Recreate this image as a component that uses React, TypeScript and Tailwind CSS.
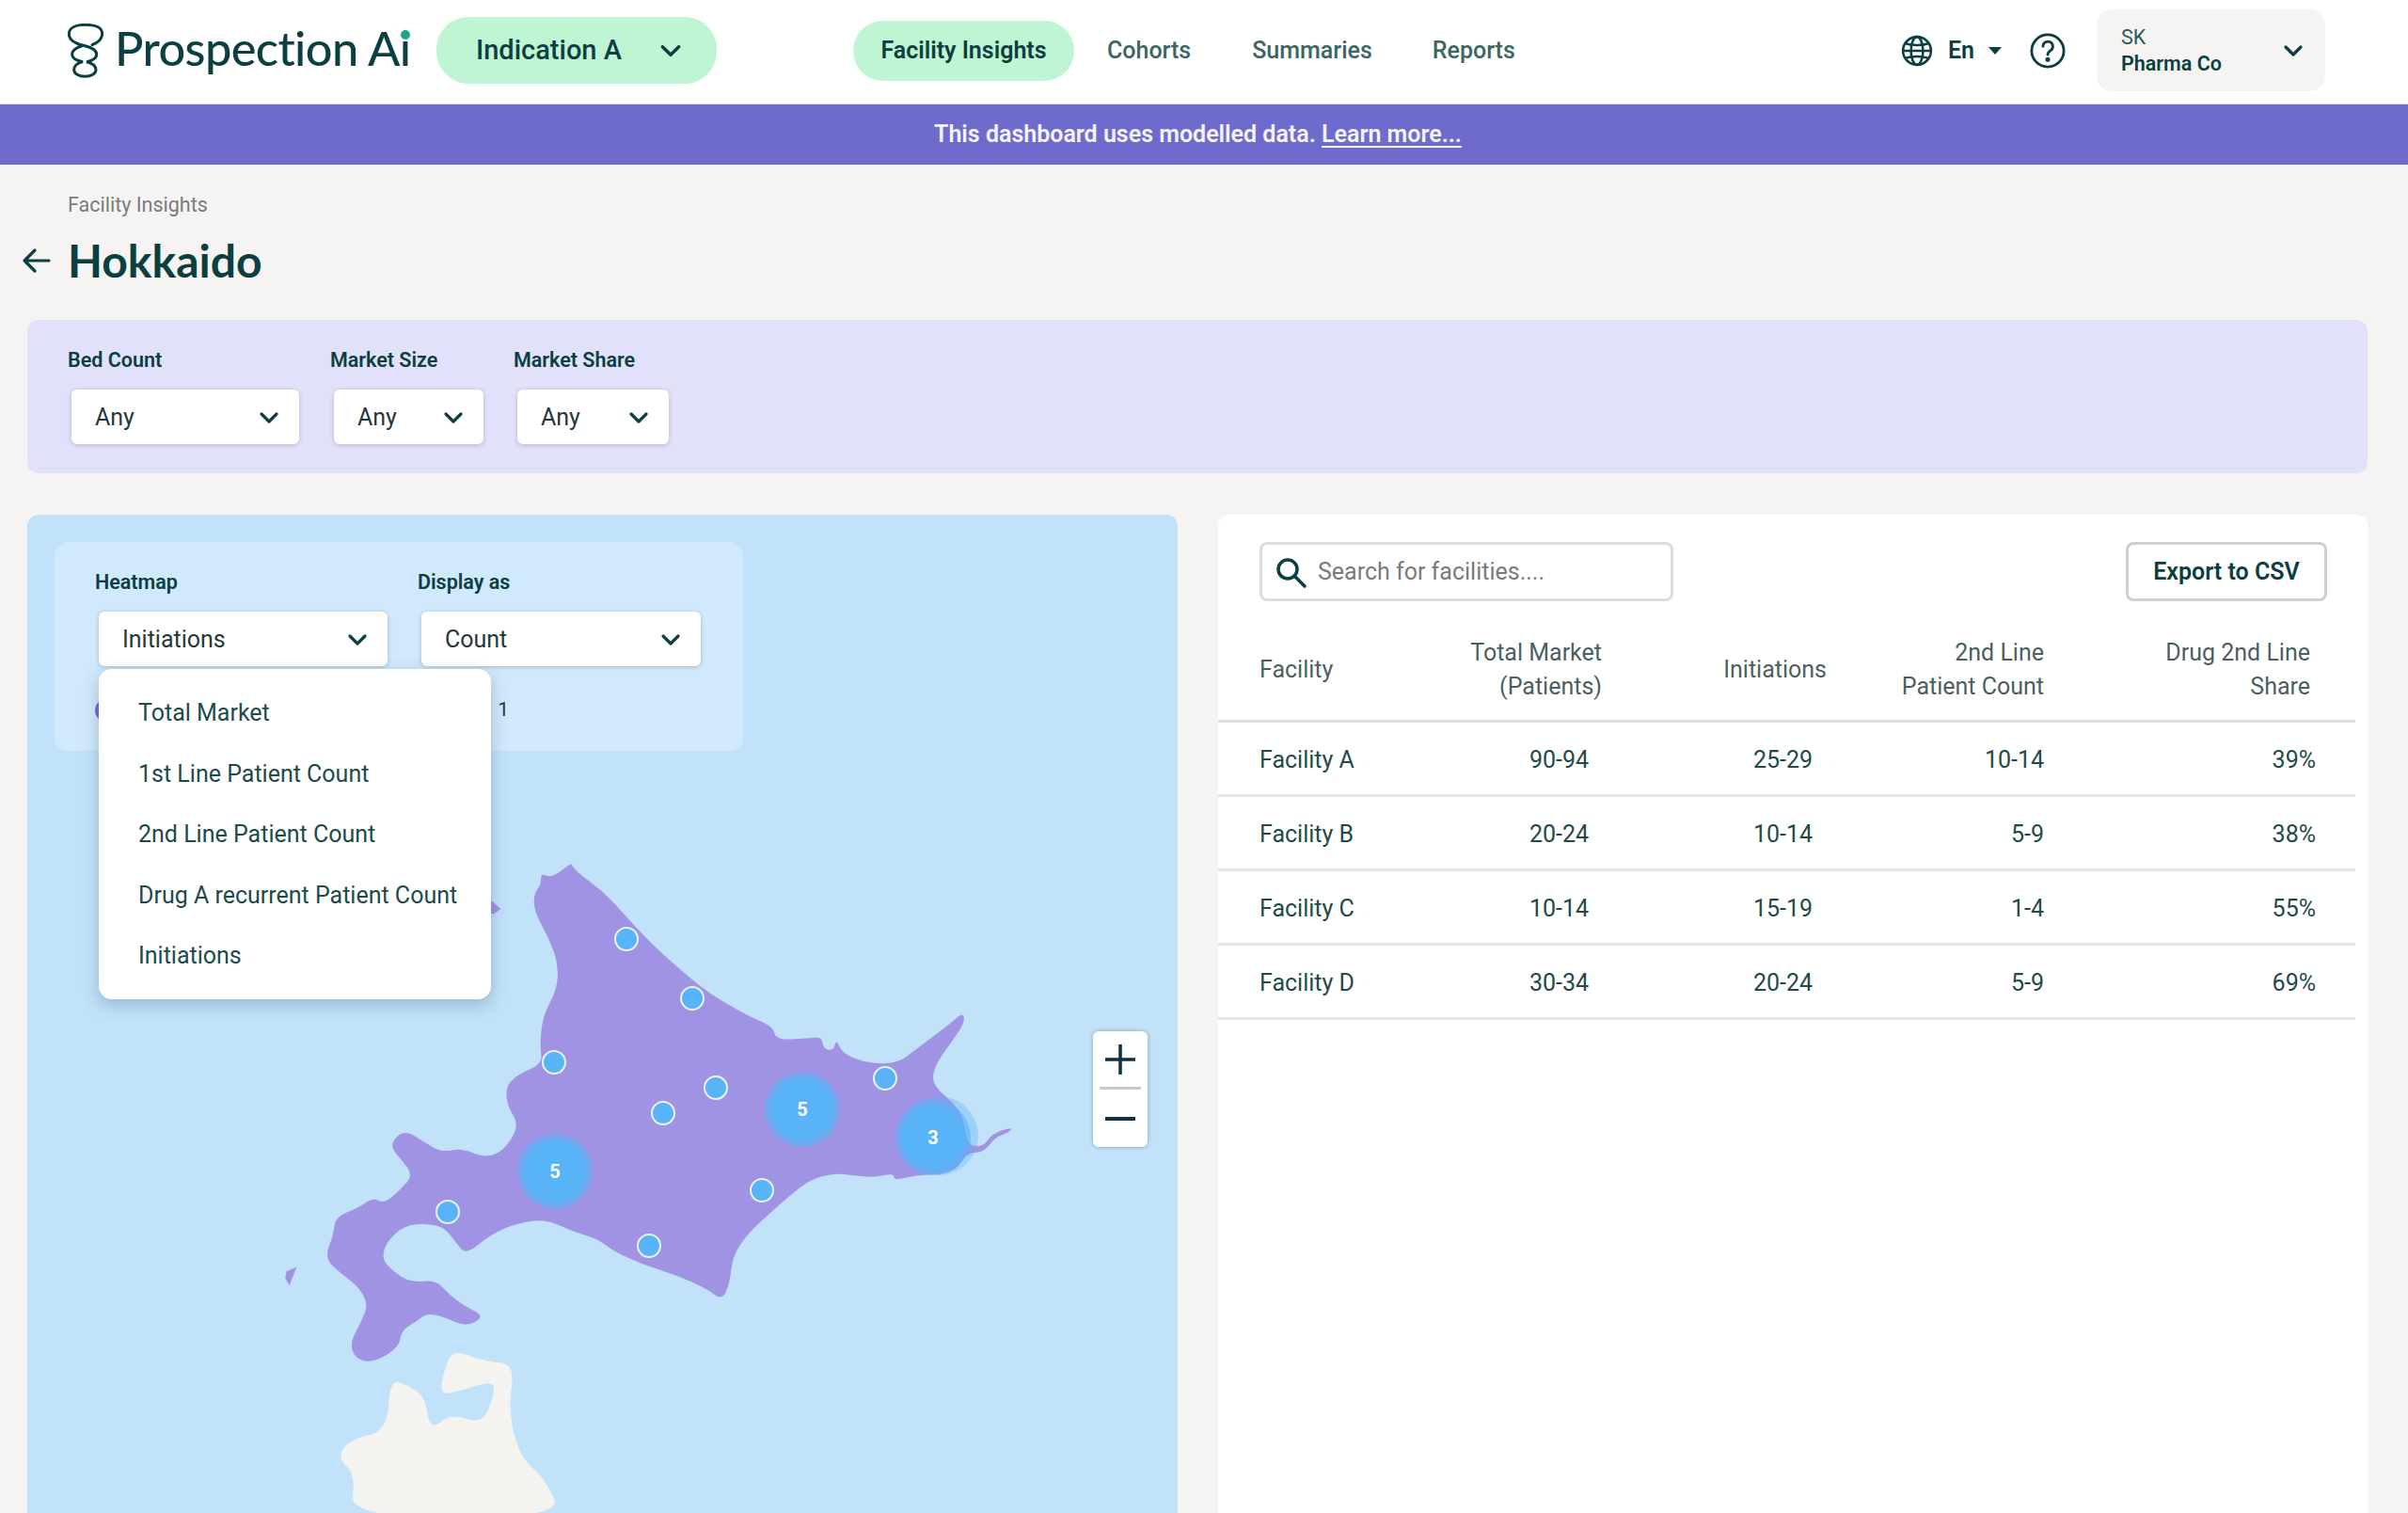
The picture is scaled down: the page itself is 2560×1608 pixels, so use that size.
import React from "react";

const DARK = "#0b3f41";

function Chevron({ className = "", size = 24, sw = 3.2 }: { className?: string; size?: number; sw?: number }) {
  return (
    <svg className={className} width={size} height={size} viewBox="0 0 24 24" fill="none" stroke={DARK} strokeWidth={sw} strokeLinecap="round" strokeLinejoin="round">
      <path d="M4 8l8 8 8-8" />
    </svg>
  );
}

function Select({ label, value, w, labelWrapClass = "" }: { label: string; value: string; w: string; labelWrapClass?: string }) {
  return (
    <div className={labelWrapClass}>
      <div className="text-[21.5px] leading-[24px] font-semibold text-[#0b3f41]">{label}</div>
      <div className={`${w} mt-[19px] ml-[4px] h-[58px] pt-[2px] rounded-[6px] bg-white shadow-[0_1px_5px_rgba(0,0,0,0.2)] flex items-center justify-between pl-[25px] pr-[20px] text-[25px] text-[#26373a]`}>
        <span>{value}</span>
        <Chevron />
      </div>
    </div>
  );
}

// Rounds the corners of a traced outline, keeping it a single drawing path.
function smooth(pts: number[][]) {
  const n = pts.length;
  const mid = (a: number[], b: number[]) => [(a[0] + b[0]) / 2, (a[1] + b[1]) / 2];
  const start = mid(pts[n - 1], pts[0]);
  let d = `M${start[0]} ${start[1]}`;
  for (let i = 0; i < n; i++) {
    const m = mid(pts[i], pts[(i + 1) % n]);
    d += `Q${pts[i][0]} ${pts[i][1]} ${m[0]} ${m[1]}`;
  }
  return d + "Z";
}

const hokkaido = [
  [535, 85], [548, 105], [590, 145], [625, 195], [670, 260], [720, 320], [770, 375], [815, 410], [850, 435], [885, 455], [890, 485], [945, 482], [970, 478], [972, 505], [990, 510], [995, 483], [1005, 515], [1040, 535], [1075, 540], [1105, 535], [1130, 510], [1170, 470], [1195, 445], [1215, 422], [1218, 445], [1195, 490], [1170, 535], [1160, 575], [1175, 605], [1195, 625], [1215, 660], [1222, 726], [1250, 730], [1265, 700], [1302, 684], [1295, 697], [1270, 708], [1252, 742], [1220, 744], [1200, 790], [1130, 795], [1095, 807], [1095, 790], [1060, 800], [1025, 795], [990, 790], [950, 805], [920, 835], [885, 875], [840, 930], [815, 980], [810, 1040], [797, 1082], [770, 1055], [720, 1025], [660, 1000], [610, 970], [580, 940], [540, 925], [490, 895], [440, 905], [395, 930], [352, 977], [335, 950], [315, 915], [285, 905], [245, 910], [215, 945], [205, 985], [225, 1015], [255, 1040], [300, 1035], [320, 1065], [350, 1095], [385, 1118], [352, 1142], [315, 1120], [285, 1110], [265, 1130], [240, 1150], [235, 1190], [190, 1224], [160, 1215], [150, 1180], [170, 1130], [182, 1090], [165, 1050], [135, 1020], [106, 985], [122, 930], [125, 890], [165, 870], [190, 846], [210, 860], [240, 825], [260, 795], [240, 760], [218, 725], [245, 690], [280, 720], [310, 742], [345, 733], [385, 755], [415, 740], [437, 700], [440, 670], [425, 640], [420, 595], [440, 565], [485, 540], [480, 500], [485, 430], [510, 370], [512, 310], [495, 250], [470, 190], [470, 150], [482, 130], [482, 103], [500, 115], [535, 80],
];

const honshu = [
  [330, 1193], [385, 1222], [437, 1226], [425, 1330], [445, 1440], [490, 1490], [520, 1580], [150, 1580], [160, 1480], [128, 1440], [150, 1400], [215, 1380], [220, 1262], [250, 1275], [280, 1300], [290, 1380], [325, 1340], [380, 1365], [400, 1300], [400, 1265], [350, 1285], [305, 1300], [315, 1235],
];

const dots = [
  [666, 998],
  [736, 1061],
  [589, 1129],
  [761, 1156],
  [705, 1183],
  [941, 1146],
  [810, 1265],
  [690, 1324],
  [476, 1288],
];

const clusters = [
  { x: 853, y: 1179, n: "5" },
  { x: 590, y: 1245, n: "5" },
  { x: 992, y: 1209, n: "3" },
];

const rows = [
  ["Facility A", "90-94", "25-29", "10-14", "39%"],
  ["Facility B", "20-24", "10-14", "5-9", "38%"],
  ["Facility C", "10-14", "15-19", "1-4", "55%"],
  ["Facility D", "30-34", "20-24", "5-9", "69%"],
];

const MAP_X = 29;
const MAP_Y = 547;

export default function App() {
  return (
    <div className="w-[2560px] h-[1608px] overflow-hidden bg-[#f5f4f3] text-[#0b3f41]" style={{ fontFamily: "Roboto, 'Liberation Sans', sans-serif" }}>
      {/* header */}
      <header className="h-[111px] pb-[3px] bg-white flex items-center border-b border-[#dcdcf2]">
        <div className="ml-[72px] flex items-center w-[392px] shrink-0">
          <svg width="38" height="58" viewBox="0 0 114 174" fill="none" stroke={DARK} strokeWidth="9" strokeLinecap="round">
            <path d="M78 68C98 60 110 48 110 32C110 12 85 4 55 4C25 4 4 14 4 34C4 54 25 64 50 70C75 76 92 84 92 98C92 110 78 120 60 122C78 126 90 134 90 148C90 160 75 169 55 169C35 169 20 160 20 148C20 134 32 126 48 122C28 118 14 110 14 98C14 86 28 76 44 72" />
          </svg>
          <span className="ml-[12px] mb-[4px] text-[50.5px] leading-none tracking-[-0.6px] font-medium text-[#0b3f41] relative" style={{ fontFamily: "Lato, sans-serif" }}>
            Prospection Ai
            <span className="absolute right-[0px] top-[6px] w-[10px] h-[10px] rounded-full bg-[#1fa58a]" />
          </span>
        </div>
        <div className="w-[298px] h-[71px] rounded-[34px] bg-[#bff5d3] flex items-center justify-between pl-[42px] pr-[36px] shrink-0 text-[29px] font-medium">
          <span>Indication A</span>
          <Chevron size={26} />
        </div>
        <nav className="ml-[145px] flex items-center text-[25px] font-medium text-[#3c6663] shrink-0">
          <div className="w-[235px] h-[64px] rounded-[32px] bg-[#bff5d3] flex items-center justify-center font-semibold text-[#0b3f41]">Facility Insights</div>
          <span className="ml-[35px]">Cohorts</span>
          <span className="ml-[65px]">Summaries</span>
          <span className="ml-[64px]">Reports</span>
        </nav>
        <div className="ml-auto flex items-center mr-[88px]">
          <svg width="34" height="34" viewBox="0 0 24 24" fill="none" stroke={DARK} strokeWidth="1.800">
            <circle cx="12" cy="12" r="10.500" />
            <ellipse cx="12" cy="12" rx="4.500" ry="10.500" />
            <path d="M1.500 12h21M3.500 6.500c5 1.500 12 1.500 17 0M3.500 17.500c5-1.500 12-1.500 17 0" />
          </svg>
          <span className="ml-[16px] text-[25px] font-semibold">En</span>
          <svg className="ml-[14px]" width="16" height="10" viewBox="0 0 16 10" fill={DARK}><path d="M1 1h14L8 9z" /></svg>
          <svg className="ml-[29px]" width="38" height="38" viewBox="0 0 24 24" fill="none" stroke={DARK} strokeWidth="1.800" strokeLinecap="round">
            <circle cx="12" cy="12" r="10.800" />
            <path d="M8.800 9a3.300 3.300 0 1 1 5 2.900c-1.100.7-1.800 1.400-1.800 2.600" />
            <circle cx="12" cy="17.800" r="0.700" fill={DARK} />
          </svg>
          <div className="ml-[33px] w-[243px] h-[87px] rounded-[16px] bg-[#f5f4f3] flex items-center justify-between pl-[26px] pr-[22px]">
            <div className="text-[21.5px] leading-[28px]">
              <div className="font-normal text-[#2c5a5a]">SK</div>
              <div className="font-semibold">Pharma Co</div>
            </div>
            <Chevron />
          </div>
        </div>
      </header>

      {/* banner */}
      <div className="h-[64px] pr-[13px] bg-[#6f6bcd] flex items-center justify-center text-[25px] font-semibold text-[#f4f3fb]">
        <span>This dashboard uses modelled data.&nbsp;<span className="underline underline-offset-4">Learn more...</span></span>
      </div>

      <main className="px-[29px] pr-[43px]">
        <div className="pl-[43px] pt-[31px] text-[21.5px] leading-[24px] text-[#7b7b7b]">Facility Insights</div>
        <div className="mt-[22px] h-[50px] flex items-center relative">
          <svg className="absolute left-[-6px]" width="32" height="32" viewBox="0 0 32 32" fill="none" stroke={DARK} strokeWidth="3.200" strokeLinecap="round" strokeLinejoin="round">
            <path d="M29 16H3M14 5L3 16l11 11" />
          </svg>
          <h1 className="pl-[43px] text-[48px] font-bold leading-none" style={{ fontFamily: "Lato, sans-serif" }}>Hokkaido</h1>
        </div>

        {/* filter band */}
        <section className="mt-[38px] h-[163px] rounded-[12px] bg-[#e2e1fb] pl-[43px] pt-[31px] flex items-start">
          <Select label="Bed Count" value="Any" w="w-[242px]" labelWrapClass="w-[279px]" />
          <Select label="Market Size" value="Any" w="w-[159px]" labelWrapClass="w-[195px]" />
          <Select label="Market Share" value="Any" w="w-[161px]" />
        </section>

        <div className="mt-[44px] flex gap-[43px] items-start">
          {/* map */}
          <section className="relative w-[1223px] h-[1100px] rounded-[12px] bg-[#c2e2f9] overflow-hidden shrink-0">
            <svg className="absolute" style={{ left: 280 - MAP_X, top: 880 - MAP_Y }} width="960" height="728" viewBox="0 0 1568 1568" preserveAspectRatio="none">
              <path fill="#f4f3ef" d={smooth(honshu)} />
              <path fill="#a093e3" d={smooth(hokkaido)} />
              <path fill="#a093e3" d="M40 1015L58 1005 45 1047 38 1030Z" />
              <path fill="#a093e3" d="M395 165L412 185 400 197 385 190Z" />
            </svg>

            {dots.map(([x, y]) => (
              <div key={`${x}-${y}`} className="absolute w-[26px] h-[26px] rounded-full bg-[#58b3f7] border-2 border-[#e8f3fc] -translate-x-1/2 -translate-y-1/2" style={{ left: x - MAP_X, top: y - MAP_Y }} />
            ))}
            <div className="absolute w-[84px] h-[84px] rounded-full bg-[#58b3f7]/35 -translate-x-1/2 -translate-y-1/2" style={{ left: 998 - MAP_X, top: 1207 - MAP_Y }} />
            {clusters.map((c) => (
              <div key={c.x} className="absolute w-[80px] h-[80px] rounded-full bg-[#58b3f7]/60 flex items-center justify-center -translate-x-1/2 -translate-y-1/2" style={{ left: c.x - MAP_X, top: c.y - MAP_Y }}>
                <div className="w-[68px] h-[68px] rounded-full bg-[#58b3f7] flex items-center justify-center text-[20px] font-bold text-white">{c.n}</div>
              </div>
            ))}

            {/* zoom control */}
            <div className="absolute left-[1133px] top-[549px] w-[58px] h-[123px] rounded-[6px] bg-white shadow-[0_0_4px_rgba(0,0,0,0.3)] flex flex-col items-center">
              <svg className="mt-[13px]" width="34" height="34" viewBox="0 0 34 34" stroke="#0e2f44" strokeWidth="3.500"><path d="M17 1v32M1 17h32" /></svg>
              <div className="mt-[12px] w-[44px] h-[3px] bg-[#c9c9c9]" />
              <svg className="mt-[29px]" width="34" height="4" viewBox="0 0 34 4" stroke="#0e2f44" strokeWidth="4"><path d="M1 2h32" /></svg>
            </div>

            {/* legend + selects */}
            <div className="absolute left-[29px] top-[29px] w-[732px] h-[222px] rounded-[14px] bg-[#d0e9fc] pl-[43px] pt-[31px]">
              <div className="flex items-start">
                <Select label="Heatmap" value="Initiations" w="w-[307px]" labelWrapClass="w-[343px]" />
                <Select label="Display as" value="Count" w="w-[297px]" />
              </div>
              <div className="mt-[31px] flex items-center justify-between w-[440px] text-[21px] text-[#26373a]">
                <span className="w-[24px] h-[24px] rounded-full bg-[#6f6bcd]" />
                <span>1</span>
              </div>
            </div>

            {/* dropdown */}
            <div className="absolute left-[76px] top-[164px] w-[417px] h-[351px] rounded-[14px] bg-white shadow-[0_6px_18px_rgba(40,70,100,0.28)] pt-[15px] pl-[42px] text-[25px] text-[#1d4a4a]">
              {["Total Market", "1st Line Patient Count", "2nd Line Patient Count", "Drug A recurrent Patient Count", "Initiations"].map((t) => (
                <div key={t} className="h-[64.400px] flex items-center whitespace-nowrap">{t}</div>
              ))}
            </div>
          </section>

          {/* table panel */}
          <section className="w-[1222px] h-[1100px] rounded-[12px] bg-white shrink-0">
            <div className="flex items-center justify-between pl-[44px] pr-[43px] pt-[29px]">
              <div className="w-[440px] h-[63px] rounded-[8px] border-[3px] border-[#dcdcdc] flex items-center pl-[12px] text-[25px] text-[#7a7a7a]">
                <svg width="36" height="36" viewBox="0 0 36 36" fill="none" stroke={DARK} strokeWidth="3.500" strokeLinecap="round">
                  <circle cx="15" cy="15" r="10" />
                  <path d="M23 23l10 10" />
                </svg>
                <span className="ml-[11px]">Search for facilities....</span>
              </div>
              <div className="w-[214px] h-[63px] rounded-[8px] border-[3px] border-[#cfcfcf] flex items-center justify-center text-[25px] font-semibold">Export to CSV</div>
            </div>

            <div className="mt-[19px] mr-[13px]">
              <div className="h-[110px] border-b-[3px] border-[#dedede] grid grid-cols-[260px_148px_239px_231px_1fr] items-center text-[25px] leading-[36px] text-[#4b5f5f]">
                <div className="pl-[44px]">Facility</div>
                <div className="text-right whitespace-nowrap">Total Market<br />(Patients)</div>
                <div className="text-right">Initiations</div>
                <div className="text-right whitespace-nowrap">2nd Line<br />Patient Count</div>
                <div className="text-right pr-[48px] whitespace-nowrap">Drug 2nd Line<br />Share</div>
              </div>
              {rows.map((r) => (
                <div key={r[0]} className="h-[79px] pt-[4px] border-b-[3px] border-[#e6e6e6] grid grid-cols-[260px_148px_239px_231px_1fr] items-center text-[25px] text-[#1f4a4a]">
                  <div className="pl-[44px]">{r[0]}</div>
                  <div className="text-right pr-[14px]">{r[1]}</div>
                  <div className="text-right pr-[15px]">{r[2]}</div>
                  <div className="text-right">{r[3]}</div>
                  <div className="text-right pr-[42px]">{r[4]}</div>
                </div>
              ))}
            </div>
          </section>
        </div>
      </main>
    </div>
  );
}
